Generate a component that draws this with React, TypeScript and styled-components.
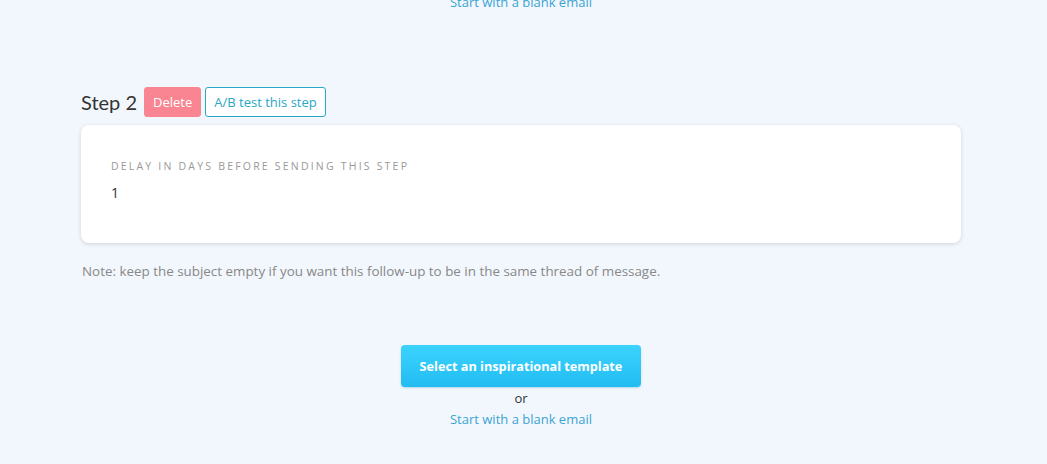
import React from "react";
import styled, { createGlobalStyle } from "styled-components";

const GlobalStyle = createGlobalStyle`
  html, body {
    margin: 0;
    padding: 0;
    background: #f2f7fd;
    font-family: "Open Sans", Lato, sans-serif;
    color: #333;
  }
`;

const Page = styled.div`
  width: 1047px;
  height: 464px;
  overflow: hidden;
  box-sizing: border-box;
  padding: 0 86px 0 81px;
`;

const StartBlock = styled.div<{ top?: boolean }>`
  display: flex;
  flex-direction: column;
  align-items: center;
  margin-top: ${props => (props.top ? "-10px" : "65px")};
`;

const TemplateButton = styled.button`
  width: 240px;
  height: 42px;
  border: none;
  border-radius: 4px;
  background: linear-gradient(to bottom, #3cd3fd, #22bcf3);
  box-shadow: 0 1px 2px rgba(0, 120, 170, 0.25);
  color: #fff;
  font-family: "Open Sans", sans-serif;
  font-weight: 700;
  font-size: 12.7px;
  cursor: pointer;
`;

const Or = styled.div`
  font-size: 13px;
  color: #333;
  margin-top: 2px;
  line-height: 18px;
`;

const BlankLink = styled.a`
  font-size: 13px;
  color: #3ba4d3;
  line-height: 18px;
  margin-top: 3px;
  text-decoration: none;
`;

const StepHeader = styled.div`
  display: flex;
  align-items: center;
  gap: 4px;
  margin-top: 76px;
`;

const StepTitle = styled.h2`
  margin: 0 3px 0 0;
  font-family: Lato, sans-serif;
  font-size: 20px;
  font-weight: 400;
  color: #333;
`;

const SmallButton = styled.button<{ variant: "danger" | "outline" }>`
  height: 30px;
  padding: 0 8px;
  border-radius: 3px;
  font-family: inherit;
  font-size: 13px;
  cursor: pointer;
  border: 1px solid ${props => (props.variant === "danger" ? "#f88591" : "#2aa6c6")};
  background: ${props => (props.variant === "danger" ? "#f88591" : "#fff")};
  color: ${props => (props.variant === "danger" ? "#fff" : "#2aa6c6")};
`;

const Card = styled.div`
  margin-top: 8px;
  height: 118px;
  box-sizing: border-box;
  background: #fff;
  border-radius: 8px;
  box-shadow: 0 1px 4px rgba(0, 0, 0, 0.14);
  padding: 34px 30px 0;
`;

const FieldLabel = styled.div`
  font-size: 10.5px;
  letter-spacing: 2.2px;
  text-transform: uppercase;
  color: #999;
`;

const FieldValue = styled.div`
  margin-top: 10px;
  font-size: 14px;
  color: #333;
`;

const Note = styled.p`
  margin: 19px 0 0 1px;
  font-size: 13.4px;
  color: #888;
`;

export default function App() {
  return (
    <>
      <GlobalStyle />
      <Page>
        <StartBlock top>
          <BlankLink href="#">Start with a blank email</BlankLink>
        </StartBlock>
        <StepHeader>
          <StepTitle>Step 2</StepTitle>
          <SmallButton variant="danger">Delete</SmallButton>
          <SmallButton variant="outline">A/B test this step</SmallButton>
        </StepHeader>
        <Card>
          <FieldLabel>Delay in days before sending this step</FieldLabel>
          <FieldValue>1</FieldValue>
        </Card>
        <Note>
          Note: keep the subject empty if you want this follow-up to be in the
          same thread of message.
        </Note>
        <StartBlock>
          <TemplateButton>Select an inspirational template</TemplateButton>
          <Or>or</Or>
          <BlankLink href="#">Start with a blank email</BlankLink>
        </StartBlock>
      </Page>
    </>
  );
}
